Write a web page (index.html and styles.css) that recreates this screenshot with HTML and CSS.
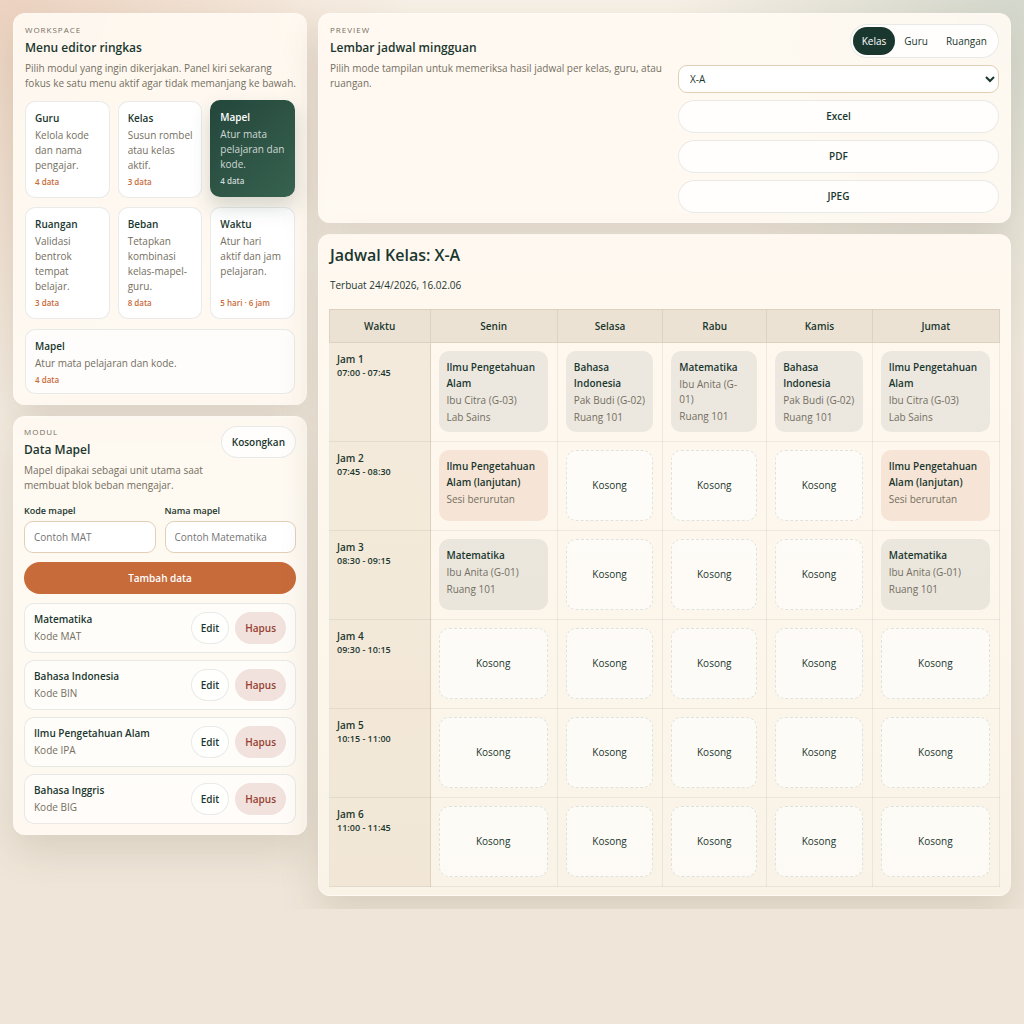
FILE: index.html
```html
<!DOCTYPE html>
<html lang="id">
<head>
  <meta charset="UTF-8">
  <meta name="viewport" content="width=device-width, initial-scale=1.0">
  <title>Jadwal Kelas</title>
  <link rel="stylesheet" href="styles.css">
</head>
<body>
<div class="app">
  <aside class="sidebar">
    <section class="panel menu-panel">
      <p class="eyebrow">Workspace</p>
      <h2>Menu editor ringkas</h2>
      <p class="desc">Pilih modul yang ingin dikerjakan. Panel kiri sekarang fokus ke satu menu aktif agar tidak memanjang ke bawah.</p>
      <div class="menu-grid">
        <button type="button" class="menu-card">
          <strong>Guru</strong>
          <span>Kelola kode dan nama pengajar.</span>
          <small>4 data</small>
        </button>
        <button type="button" class="menu-card">
          <strong>Kelas</strong>
          <span>Susun rombel atau kelas aktif.</span>
          <small>3 data</small>
        </button>
        <button type="button" class="menu-card active">
          <strong>Mapel</strong>
          <span>Atur mata pelajaran dan kode.</span>
          <small>4 data</small>
        </button>
        <button type="button" class="menu-card">
          <strong>Ruangan</strong>
          <span>Validasi bentrok tempat belajar.</span>
          <small>3 data</small>
        </button>
        <button type="button" class="menu-card">
          <strong>Beban</strong>
          <span>Tetapkan kombinasi kelas-mapel-guru.</span>
          <small>8 data</small>
        </button>
        <button type="button" class="menu-card">
          <strong>Waktu</strong>
          <span>Atur hari aktif&nbsp;dan&nbsp;jam pelajaran.</span>
          <small>5 hari · 6 jam</small>
        </button>
      </div>
      <div class="menu-card menu-summary">
        <strong>Mapel</strong>
        <span>Atur mata pelajaran dan kode.</span>
        <small>4 data</small>
      </div>
    </section>

    <section class="panel module-panel">
      <div class="module-head">
        <div>
          <p class="eyebrow">Modul</p>
          <h2>Data Mapel</h2>
          <p class="desc">Mapel dipakai sebagai unit utama saat membuat blok beban mengajar.</p>
        </div>
        <button type="button" class="btn">Kosongkan</button>
      </div>
      <form class="module-form">
        <div class="field">
          <label for="kode">Kode mapel</label>
          <input id="kode" type="text" placeholder="Contoh MAT">
        </div>
        <div class="field">
          <label for="nama">Nama mapel</label>
          <input id="nama" type="text" placeholder="Contoh Matematika">
        </div>
        <button type="button" class="btn btn-primary">Tambah data</button>
      </form>
      <ul class="items">
        <li>
          <div><strong>Matematika</strong><span>Kode MAT</span></div>
          <button type="button" class="btn">Edit</button>
          <button type="button" class="btn btn-danger">Hapus</button>
        </li>
        <li>
          <div><strong>Bahasa Indonesia</strong><span>Kode BIN</span></div>
          <button type="button" class="btn">Edit</button>
          <button type="button" class="btn btn-danger">Hapus</button>
        </li>
        <li>
          <div><strong>Ilmu Pengetahuan Alam</strong><span>Kode IPA</span></div>
          <button type="button" class="btn">Edit</button>
          <button type="button" class="btn btn-danger">Hapus</button>
        </li>
        <li>
          <div><strong>Bahasa Inggris</strong><span>Kode BIG</span></div>
          <button type="button" class="btn">Edit</button>
          <button type="button" class="btn btn-danger">Hapus</button>
        </li>
      </ul>
    </section>
  </aside>

  <main class="content">
    <section class="panel preview">
      <div>
        <p class="eyebrow">Preview</p>
        <h2>Lembar jadwal mingguan</h2>
        <p class="desc">Pilih mode tampilan untuk memeriksa hasil jadwal per kelas, guru, atau ruangan.</p>
      </div>
      <div class="preview-tools">
        <div class="segmented">
          <button type="button" class="active">Kelas</button>
          <button type="button">Guru</button>
          <button type="button">Ruangan</button>
        </div>
        <select aria-label="Kelas">
          <option>X-A</option>
          <option>X-B</option>
          <option>XI-A</option>
        </select>
        <button type="button" class="btn">Excel</button>
        <button type="button" class="btn">PDF</button>
        <button type="button" class="btn">JPEG</button>
      </div>
    </section>

    <section class="panel sheet">
      <h1>Jadwal Kelas: X-A</h1>
      <p class="created">Terbuat 24/4/2026, 16.02.06</p>
      <table class="schedule">
        <colgroup>
          <col class="col-time"><col class="col-wide"><col class="col-day"><col class="col-narrow"><col class="col-day"><col class="col-wide">
        </colgroup>
        <thead>
          <tr>
            <th>Waktu</th><th>Senin</th><th>Selasa</th><th>Rabu</th><th>Kamis</th><th>Jumat</th>
          </tr>
        </thead>
        <tbody>
          <tr>
            <th><strong>Jam 1</strong><span>07:00 - 07:45</span></th>
            <td><div class="slot filled"><strong>Ilmu Pengetahuan Alam</strong><span>Ibu Citra (G-03)</span><span>Lab Sains</span></div></td>
            <td><div class="slot filled"><strong>Bahasa Indonesia</strong><span>Pak Budi (G-02)</span><span>Ruang 101</span></div></td>
            <td><div class="slot filled"><strong>Matematika</strong><span>Ibu Anita (G-<br>01)</span><span>Ruang 101</span></div></td>
            <td><div class="slot filled"><strong>Bahasa Indonesia</strong><span>Pak Budi (G-02)</span><span>Ruang 101</span></div></td>
            <td><div class="slot filled"><strong>Ilmu Pengetahuan Alam</strong><span>Ibu Citra (G-03)</span><span>Lab Sains</span></div></td>
          </tr>
          <tr>
            <th><strong>Jam 2</strong><span>07:45 - 08:30</span></th>
            <td><div class="slot next"><strong>Ilmu Pengetahuan Alam (lanjutan)</strong><span>Sesi berurutan</span></div></td>
            <td><div class="slot empty">Kosong</div></td>
            <td><div class="slot empty">Kosong</div></td>
            <td><div class="slot empty">Kosong</div></td>
            <td><div class="slot next"><strong>Ilmu Pengetahuan Alam (lanjutan)</strong><span>Sesi berurutan</span></div></td>
          </tr>
          <tr>
            <th><strong>Jam 3</strong><span>08:30 - 09:15</span></th>
            <td><div class="slot filled"><strong>Matematika</strong><span>Ibu Anita (G-01)</span><span>Ruang 101</span></div></td>
            <td><div class="slot empty">Kosong</div></td>
            <td><div class="slot empty">Kosong</div></td>
            <td><div class="slot empty">Kosong</div></td>
            <td><div class="slot filled"><strong>Matematika</strong><span>Ibu Anita (G-01)</span><span>Ruang 101</span></div></td>
          </tr>
          <tr>
            <th><strong>Jam 4</strong><span>09:30 - 10:15</span></th>
            <td><div class="slot empty">Kosong</div></td>
            <td><div class="slot empty">Kosong</div></td>
            <td><div class="slot empty">Kosong</div></td>
            <td><div class="slot empty">Kosong</div></td>
            <td><div class="slot empty">Kosong</div></td>
          </tr>
          <tr>
            <th><strong>Jam 5</strong><span>10:15 - 11:00</span></th>
            <td><div class="slot empty">Kosong</div></td>
            <td><div class="slot empty">Kosong</div></td>
            <td><div class="slot empty">Kosong</div></td>
            <td><div class="slot empty">Kosong</div></td>
            <td><div class="slot empty">Kosong</div></td>
          </tr>
          <tr>
            <th><strong>Jam 6</strong><span>11:00 - 11:45</span></th>
            <td><div class="slot empty">Kosong</div></td>
            <td><div class="slot empty">Kosong</div></td>
            <td><div class="slot empty">Kosong</div></td>
            <td><div class="slot empty">Kosong</div></td>
            <td><div class="slot empty">Kosong</div></td>
          </tr>
        </tbody>
      </table>
    </section>
  </main>
</div>
</body>
</html>
```
FILE: styles.css
```css
:root {
  --ink: #1a372f;
  --muted: #746f61;
  --accent: #c76b3a;
  --line: rgba(26, 55, 47, 0.1);
  --sand: #e2cfb5;
}

* {
  box-sizing: border-box;
}

html {
  background: #efe6d9;
}

body {
  margin: 0;
  color: var(--ink);
  font-family: "Trebuchet MS", "Open Sans", sans-serif;
  font-size: 10px;
  line-height: 15px;
  background:
    radial-gradient(circle at top left, rgba(199, 107, 58, 0.22), transparent 30%),
    radial-gradient(circle at top right, rgba(26, 85, 67, 0.16), transparent 26%),
    linear-gradient(180deg, #f8f1e7, #efe6d9);
}

h1, h2, p, ul {
  margin: 0;
}

h1, h2, th, strong {
  font-weight: 600;
}

button, input, select {
  font: inherit;
  color: inherit;
}

.app {
  display: grid;
  grid-template-columns: 294px minmax(0, 1fr);
  gap: 11px;
  align-items: start;
  padding: 13px;
  overflow: hidden;
}

.sidebar, .content {
  display: grid;
  gap: 11px;
}

.panel {
  padding: 10px;
  border: 1px solid rgba(255, 255, 255, 0.3);
  border-radius: 12px;
  background: rgba(255, 250, 242, 0.92);
  box-shadow: 0 16px 40px rgba(73, 54, 30, 0.14);
}

.menu-panel {
  padding: 10px 7px 10px 11px;
}

.module-panel {
  padding-top: 9px;
}

.eyebrow {
  color: var(--muted);
  font-size: 8px;
  line-height: 11px;
  letter-spacing: 1px;
  text-transform: uppercase;
}

h2 {
  margin-top: 4px;
  font-size: 12px;
  line-height: 17px;
}

.desc {
  margin-top: 5px;
  color: var(--muted);
}

/* menu cards */
.menu-grid {
  display: grid;
  grid-template-columns: repeat(3, minmax(0, 1fr));
  gap: 9px 8px;
  margin: 10px 4px 0 0;
}

.menu-card {
  display: grid;
  grid-template-rows: auto 1fr auto;
  gap: 3px;
  padding: 9px 7px 9px 9px;
  border: 1px solid var(--line);
  border-radius: 10px;
  background: #fff;
  text-align: left;
}

.menu-card strong {
  line-height: 14px;
}

.menu-card span {
  color: var(--muted);
}

.menu-card small {
  color: var(--accent);
  font-size: 8px;
  font-weight: 600;
  line-height: 12px;
}

.menu-card.active {
  border-color: transparent;
  background: linear-gradient(135deg, #24463b, #37624f) border-box;
  color: #fff;
  box-shadow: 0 10px 20px rgba(26, 55, 47, 0.18);
  transform: translateY(-1px);
}

.menu-card.active span,
.menu-card.active small {
  color: rgba(255, 255, 255, 0.78);
}

.menu-summary {
  margin: 10px 4px 0 0;
  padding: 9px 9px 7px;
  background: rgba(255, 255, 255, 0.7);
}

/* buttons */
.btn {
  min-height: 32px;
  padding: 0 10px;
  border: 1px solid var(--line);
  border-radius: 17px;
  background: rgba(255, 255, 255, 0.8);
  font-weight: 600;
}

.btn-primary {
  border-color: transparent;
  background: var(--accent) border-box;
  color: #fff;
}

.btn-danger {
  border-color: transparent;
  background: #f1e2dd border-box;
  color: #963f31;
}

/* module */
.module-head {
  display: flex;
  gap: 16px;
  align-items: flex-start;
  justify-content: space-between;
}

.module-form {
  display: grid;
  grid-template-columns: 1fr 1fr;
  gap: 9px;
  margin-top: 10px;
}

.field {
  display: grid;
  gap: 3px;
}

.field label {
  font-size: 9px;
  font-weight: 600;
}

input, select {
  width: 100%;
  min-width: 0;
  border: 1px solid var(--sand);
  border-radius: 9px;
  background: #fff;
}

input {
  height: 32px;
  padding: 0 9px;
}

.btn-primary {
  grid-column: 1 / -1;
}

.items {
  display: grid;
  gap: 7px;
  margin-top: 9px;
  padding: 0;
  list-style: none;
}

.items li {
  display: flex;
  gap: 6px;
  align-items: center;
  padding: 8px 9px;
  border: 1px solid var(--line);
  border-radius: 10px;
  background: rgba(255, 255, 255, 0.6);
}

.items .btn {
  padding: 0 9px;
}

.items div {
  flex: 1;
}

.items strong, .items span {
  display: block;
}

.items span {
  margin-top: 2px;
  color: var(--muted);
}

/* preview */
.preview {
  display: grid;
  grid-template-columns: minmax(0, 1fr) 48%;
  gap: 8px;
  padding: 10px 11px 9px;
}

.preview-tools {
  display: grid;
  gap: 7px;
}

.preview-tools .btn {
  min-height: 33px;
}

.segmented {
  display: flex;
  justify-self: end;
  padding: 2px;
  border: 1px solid var(--line);
  border-radius: 17px;
  background: rgba(255, 255, 255, 0.8);
}

.segmented button {
  height: 28px;
  padding: 0 9px;
  border: 0;
  border-radius: 14px;
  background: none;
}

.segmented .active {
  background: var(--ink);
  color: #fff;
}

select {
  height: 28px;
  padding: 0 7px;
}

/* schedule */
.sheet {
  padding-bottom: 8px;
  background: linear-gradient(180deg, #fff8f0, #fdf7ed 40%, #f9f3e7);
}

.sheet h1 {
  padding-left: 1px;
  font-size: 16px;
  line-height: 20px;
}

.created {
  margin: 13px 0 16px;
  padding-left: 1px;
}

.schedule {
  width: 100%;
  table-layout: fixed;
  border-collapse: collapse;
}

.col-time {
  width: 15%;
}

.col-wide {
  width: 19%;
}

.col-narrow {
  width: 15.5%;
}

.schedule th, .schedule td {
  border: 1px solid rgba(26, 55, 47, 0.07);
}

.schedule thead th {
  height: 33px;
  padding: 0;
  border-color: #ddd2c0;
  background: #ece2d3;
}

.schedule tbody th {
  padding: 8px 7px;
  border-right-color: #ddd2c0;
  background: rgba(232, 217, 196, 0.45);
  text-align: left;
  vertical-align: top;
}

.schedule th strong, .schedule th span {
  display: block;
}

.schedule tbody th strong {
  line-height: 16px;
}

.schedule th span {
  font-size: 9px;
  line-height: 11px;
}

.schedule td {
  padding: 8px 9px 9px 8px;
  vertical-align: top;
}

.slot {
  min-height: 71px;
  padding: 8px 4px 7px 8px;
  border-radius: 10px;
}

.slot strong, .slot span {
  display: block;
}

.slot strong {
  line-height: 16px;
}

.slot span {
  margin-top: 2px;
  color: var(--muted);
}

tr:first-child .slot {
  min-height: 81px;
}

.filled {
  background: rgba(26, 55, 47, 0.08);
}

.next {
  background: rgba(199, 107, 58, 0.13);
}

.empty {
  display: grid;
  place-items: center;
  padding: 8px;
  border: 1px dashed rgba(26, 55, 47, 0.13);
  background: rgba(255, 255, 255, 0.6);
}
```
